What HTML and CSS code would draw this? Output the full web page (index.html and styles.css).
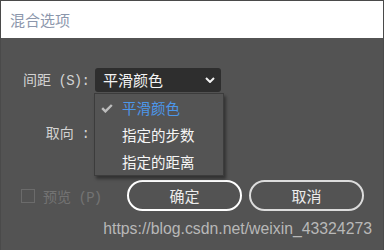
FILE: index.html
```html
<!DOCTYPE html>
<html lang="zh">
<head>
<meta charset="utf-8">
<link rel="stylesheet" href="styles.css">
</head>
<body>
<div class="window">
  <div class="titlebar">混合选项</div>
  <div class="content">
    <div class="row">
      <span class="label">间距<span class="lat"> (S):</span></span>
      <div class="select">
        <span class="select-value">平滑颜色</span>
        <svg class="chevron" width="10" height="6" viewBox="0 0 10 6"><path d="M1 1 L5 5 L9 1" fill="none" stroke="#f2f2f2" stroke-width="2"/></svg>
        <ul class="menu">
          <li class="item selected"><svg class="check" width="12" height="9" viewBox="0 0 12 9"><path d="M1.2 4.2 L4.4 7.4 L10.8 1" fill="none" stroke="#bdbdbd" stroke-width="2.4"/></svg>平滑颜色</li>
          <li class="item">指定的步数</li>
          <li class="item">指定的距离</li>
        </ul>
      </div>
    </div>
    <div class="row">
      <span class="label">取向<span class="lat"> :</span></span>
    </div>
    <div class="footer">
      <span class="preview"><span class="checkbox"></span><span class="preview-text">预览<span class="lat">&nbsp;(P)</span></span></span>
      <div class="buttons">
        <button class="btn primary">确定</button>
        <button class="btn">取消</button>
      </div>
    </div>
    <div class="watermark">https://blog.csdn.net/weixin_43324273</div>
  </div>
</div>
</body>
</html>
```
FILE: styles.css
```css
* { box-sizing: border-box; }
html, body { margin: 0; padding: 0; }
body {
  background: #535353;
  font-family: "Noto Sans CJK SC", sans-serif;
  width: 384px;
  height: 250px;
  overflow: hidden;
}
.window {
  height: 250px;
  border: 1px solid #4a4a4a;
  border-bottom: none;
}
.titlebar {
  height: 37px;
  background: #fff;
  padding-left: 9px;
  font-size: 15px;
  line-height: 37px;
  color: #8c97ac;
}
.content {
  padding: 29px 19px 0 20px;
}
.row {
  display: grid;
  grid-template-columns: 68px 126px;
  column-gap: 6px;
  align-items: center;
  height: 24px;
}
.row + .row { margin-top: 29px; }
.label {
  text-align: right;
  font-size: 14px;
  line-height: 24px;
  color: #d2d2d2;
  white-space: nowrap;
}
.lat {
  font-family: "Liberation Mono", monospace;
  letter-spacing: -0.8px;
}
.select {
  position: relative;
  height: 24px;
  background: #2e2e2e;
  border-radius: 3px;
  display: flex;
  align-items: center;
  justify-content: space-between;
  padding: 0 6px 0 8px;
}
.select-value {
  font-size: 15px;
  color: #f4f4f4;
  line-height: 24px;
}
.chevron { display: block; }
.menu {
  position: absolute;
  left: -1px;
  top: 25px;
  width: 130px;
  margin: 0;
  padding: 0;
  list-style: none;
  background: #545454;
  border: 1px solid #3c3c3c;
  box-shadow: 2px 3px 3px rgba(0,0,0,0.4);
  z-index: 2;
}
.item {
  position: relative;
  height: 27px;
  line-height: 27px;
  padding-left: 27px;
  font-size: 14.5px;
  color: #f6f6f6;
  white-space: nowrap;
}
.item.selected { color: #4c97ea; }
.check {
  position: absolute;
  left: 6px;
  top: 10px;
}
.footer {
  margin-top: 36px;
  display: flex;
  align-items: center;
  height: 31px;
}
.preview {
  display: flex;
  align-items: center;
  font-size: 14px;
  color: #737373;
  white-space: nowrap;
}
.checkbox {
  width: 14px;
  height: 14px;
  border: 1px solid #6b6b6b;
  margin-right: 8px;
}
.buttons {
  margin-left: auto;
  display: flex;
  gap: 7px;
}
.btn {
  width: 115px;
  height: 31px;
  border-radius: 16px;
  background: transparent;
  border: 2px solid #dcdcdc;
  color: #ececec;
  font-family: "Noto Sans CJK SC", sans-serif;
  font-size: 15px;
  padding: 0;
}
.btn.primary { border: 2.5px solid #ffffff; }
.watermark {
  margin-top: 9px;
  margin-right: -8px;
  text-align: right;
  font-family: "Liberation Sans", Arial, sans-serif;
  font-size: 15.8px;
  line-height: 18px;
  color: #b8b8b8;
  white-space: nowrap;
}
```
